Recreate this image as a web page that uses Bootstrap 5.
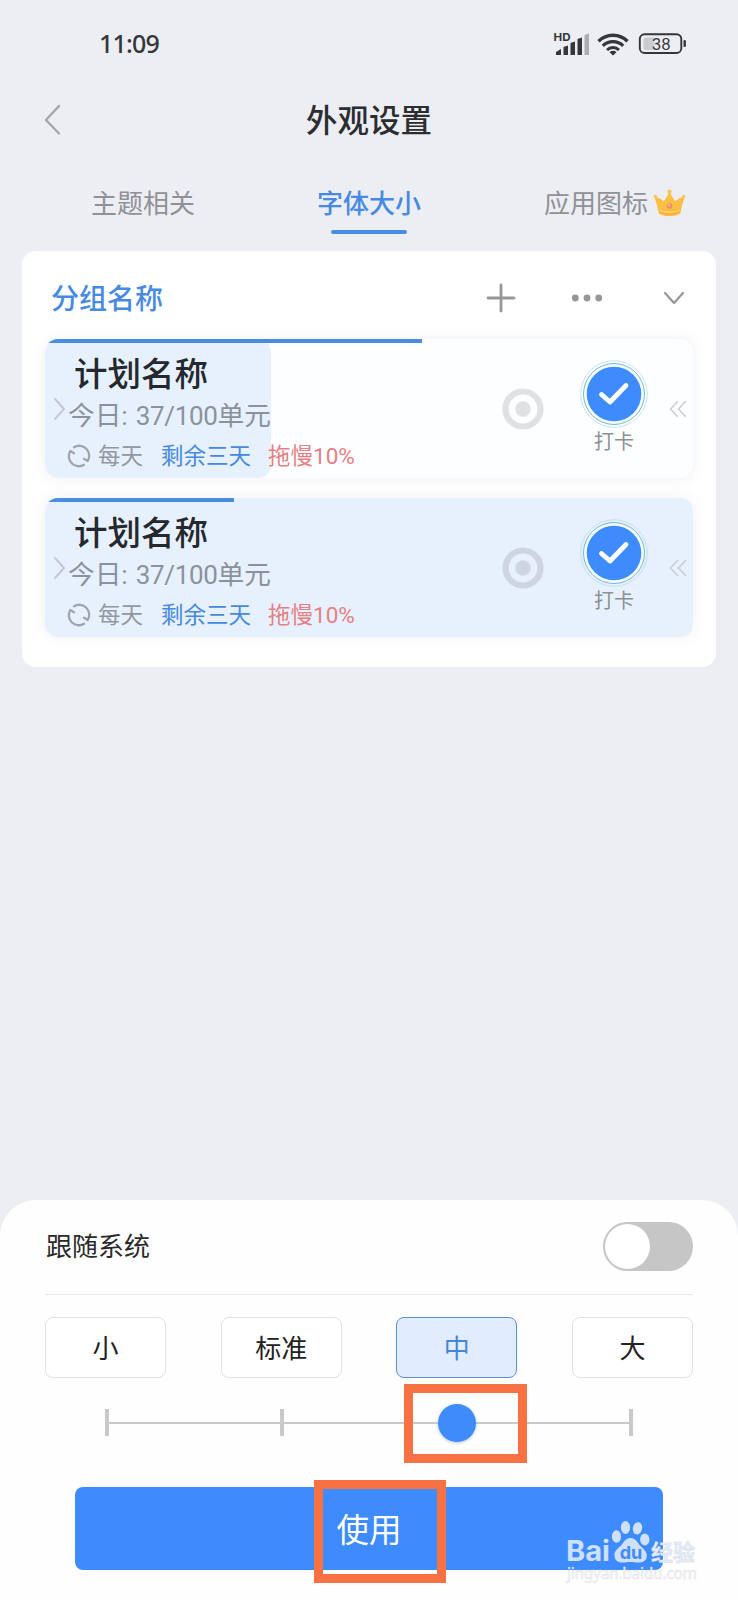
<!DOCTYPE html>
<html lang="zh-CN">
<head>
<meta charset="utf-8">
<meta name="viewport" content="width=device-width, initial-scale=1">
<title>外观设置</title>
<link href="https://cdn.jsdelivr.net/npm/bootstrap@5.3.0/dist/css/bootstrap.min.css" rel="stylesheet">
<style>
  body{font-family:Roboto,"Noto Sans CJK SC",sans-serif;background:#edeef3;color:#2b2d31;line-height:1}
  svg{display:block;flex:none}
  .app-screen{width:738px;height:1600px}
  .status-line{height:60px;padding:28px 51px 0 99px}
  .clock{font:500 25px/32px "Noto Sans","Noto Sans CJK SC",sans-serif;letter-spacing:-.8px;color:#34363a;margin-top:-1px}
  .title-line{height:120px;padding-left:44px}
  .page-title{font-size:31.5px;font-weight:500;line-height:124px;color:#2b2d31;top:0}
  .tab-line{height:71px;font-size:26px;color:#8f9196}
  .tab-line .nav-link{color:inherit;padding:0;line-height:48px;height:46px}
  .tab-line .nav-link.active{color:#468ae4;font-weight:500}
  .tab-mark{width:76px;height:4px;border-radius:2px;background:#4a8ce0;margin-top:4px}
  .group-card{margin:0 22px;height:416px;border:0;border-radius:14px;padding:0 23px 0 23px}
  .group-head{height:88px;padding:6px 8px 0 6px}
  .group-name{font-size:28px;font-weight:500;color:#468ae4;line-height:40px;padding-top:4px}
  .plan{height:139px;border-radius:13px;box-shadow:0 0 14px rgba(60,70,90,.08);background:#fdfeff}
  .plan + .plan{margin-top:20px}
  .plan.tinted,.plan-fill{background:#e7f1fe}
  .plan-clip{border-radius:13px;overflow:hidden}
  .plan-fill{width:226px;height:139px;border-radius:13px}
  .plan-bar{height:4px;background:#4a8ce0}
  .plan-text{width:330px;white-space:nowrap}
  .plan-title{font-size:33.5px;font-weight:500;line-height:40px;margin:16px 0 0 29px;color:#25282d}
  .today{font-size:26.7px;line-height:36px;color:#8b929c;margin:3px 0 0 8px;padding-left:15px}
  .today .digits{font-size:26px;letter-spacing:-.35px;margin-left:8px}
  .meta-line{font-size:22.5px;line-height:30px;margin:7px 0 0 22px}
  .meta-line .c-grey{margin-left:7px}
  .meta-line .c-blue{margin-left:18px}
  .meta-line .c-red{margin-left:17px}
  .plan-side{padding-right:6px}
  .done-box{margin:-3px 20px 0 35px}
  .c-grey{color:#92989f}.c-blue{color:#4589df}.c-red{color:#e57f83}
  .done-label{font-size:20px;line-height:26px;color:#8d9093}
  .plan-target{opacity:.11}
  .sheet{height:400px;border-radius:36px 36px 0 0;background:#fefefe;padding:0 45px}
  .follow{height:94px;font-size:26px;color:#2a2a2a;padding-bottom:2px}
  .follow-label{padding:2px 0 0 1px}
  .toggle{width:90px;height:49px;border-radius:25px;background:#c6c6c6;padding:2px}
  .toggle i{display:block;width:45px;height:45px;border-radius:50%;background:#fff}
  .rule{height:1px;background:#e8e8e8}
  .size-row{margin-top:22px}
  .size-btn{width:121px;height:61px;border:1px solid #e2e2e2;border-radius:8px;font-size:26px;padding:3px 0 0;color:#222;background:#fff}
  .size-btn.picked{background:#e1edfe;border-color:#5c8fd0;color:#4686d8}
  .slider{margin:31px 60px 0;height:27px}
  .track{height:2px;background:#c9c9c9}
  .tick{width:4px;height:27px;background:#c9c9c9}
  .knob{width:38px;height:38px;border-radius:50%;background:#3e8cfb;box-shadow:0 1px 3px rgba(40,90,160,.35);margin:0 -18px 0 -16px}
  .use-row{margin-top:51px}
  .use-btn{width:588px;height:83px;border:0;border-radius:8px;background:#3d8bfd;color:#fff;font-size:32.5px;padding:6px 0 0}
  .callout{border:9px solid #f87143}
</style>
</head>
<body>
<svg width="0" height="0" class="position-absolute">
  <defs>
    <linearGradient id="gold" x1="0" y1="0" x2="0" y2="1"><stop offset="0" stop-color="#fdc23c"/><stop offset=".65" stop-color="#fdc046"/><stop offset="1" stop-color="#fbae35"/></linearGradient>
    <symbol id="arrow-r" viewBox="0 0 13 24"><path d="M2 2 11 12 2 22" fill="none" stroke="#c3c9d1" stroke-width="2" stroke-linecap="round" stroke-linejoin="round"/></symbol>
    <symbol id="arrows-l" viewBox="0 0 18 18"><path d="M8.500 1.500 1.500 9l7 7.500M16.500 1.500 9.500 9l7 7.500" fill="none" stroke="#c9cdd2" stroke-width="1.500" stroke-linecap="round" stroke-linejoin="round"/></symbol>
    <symbol id="cycle" viewBox="0 0 24 24"><g fill="none" stroke="#a0a5ab" stroke-width="2.300" stroke-linecap="round" stroke-linejoin="round"><path d="M7 3.200A10 10 0 0 1 20.700 17L17 14.800"/><path d="M17 20.800A10 10 0 0 1 3.300 7L7 9.200"/></g></symbol>
    <symbol id="target" viewBox="0 0 42 42"><circle cx="21" cy="21" r="17.500" fill="none" stroke="#000" stroke-width="6.200"/><circle cx="21" cy="21" r="7.700"/></symbol>
    <symbol id="done" viewBox="0 0 70 70"><circle cx="35" cy="35" r="33.300" fill="none" stroke="#b9e0ee" stroke-width=".9"/><circle cx="35" cy="35" r="30.500" fill="#f3fdff" stroke="#7fb4d0" stroke-width="1"/><circle cx="35" cy="35" r="27.300" fill="#3d8bfd"/><path d="M22.500 35.500 31 43 47 26.500" fill="none" stroke="#fff" stroke-width="4.800" stroke-linecap="round" stroke-linejoin="round"/></symbol>
  </defs>
</svg>
<main class="app-screen d-flex flex-column overflow-hidden">
  <header>
    <div class="status-line d-flex justify-content-between">
      <span class="clock">11:09</span>
      <svg width="134" height="28" viewBox="553 28 134 28">
        <text x="553.500" y="41" font-family="Inter,sans-serif" font-size="11" font-weight="700" fill="#34363a" textLength="17" lengthAdjust="spacingAndGlyphs">HD</text>
        <g fill="#34363a"><path d="M556 55v-3l5-3v6zM563.500 55v-8l4.500-1.500V55zM570.500 55V43l4.500-1.500V55zM577.500 55V39l4.500-1.500V55z"/><path fill="#abadb2" d="M584.500 55V35l4.500-1.500V55z"/></g>
        <g fill="none" stroke="#34363a" stroke-width="3.400"><path d="M598.500 41.200a20.500 20.500 0 0 1 29 0"/><path d="M602.800 45.800a14.500 14.500 0 0 1 20.400 0" stroke-width="3.200"/><path d="M607 50a8.700 8.700 0 0 1 12 0" stroke-width="3"/></g>
        <path d="M609.500 52.300a5 5 0 0 1 7 0L613 55.600z" fill="#34363a"/>
        <rect x="639.800" y="34.300" width="41.500" height="18.700" rx="4.800" fill="none" stroke="#34363a" stroke-width="1.900"/>
        <rect x="643.500" y="37.500" width="11" height="12.500" rx="2" fill="#cbccd0"/>
        <rect x="683.500" y="40" width="2.400" height="7" rx="1" fill="#34363a"/>
        <text x="661.500" y="49.500" text-anchor="middle" font-family="Liberation Sans,sans-serif" font-size="16" letter-spacing=".5" fill="#34363a">38</text>
      </svg>
    </div>
    <div class="title-line d-flex align-items-center position-relative">
      <svg width="17" height="32" viewBox="0 0 17 32"><path d="M15 2 2 16l13 13.500" fill="none" stroke="#a4a6aa" stroke-width="2.400" stroke-linecap="round" stroke-linejoin="round"/></svg>
      <h1 class="page-title position-absolute start-0 end-0 text-center m-0">外观设置</h1>
    </div>
    <nav class="tab-line nav nav-justified flex-nowrap align-items-start">
      <div class="d-flex justify-content-center" style="width:286px"><a class="nav-link">主题相关</a></div>
      <div class="d-flex flex-column align-items-center" style="width:166px"><a class="nav-link active">字体大小</a><span class="tab-mark"></span></div>
      <div class="d-flex justify-content-end gap-2" style="width:234px"><a class="nav-link flex-grow-0">应用图标</a>
        <svg width="33" height="28" viewBox="0 0 33 28" style="margin-top:9px;margin-left:-3px"><path d="M2 8q5 1 9 5L16.500 4 22 13q4-4 9-5Q28.500 16 26.800 24.500 16.500 29 6.300 24.500 4.600 16 2 8z" fill="url(#gold)" stroke="#f9b43e" stroke-width=".8" stroke-linejoin="round"/><g fill="#fcc650"><circle cx="2.300" cy="7.500" r="1.800"/><circle cx="16.500" cy="2.800" r="2.200"/><circle cx="30.700" cy="7.500" r="1.800"/></g><path d="M6.500 21.500q10 3.500 20 0" fill="none" stroke="#ffdc7a" stroke-width="1.300"/><circle cx="16.500" cy="17" r="2.800" fill="#f08a62"/><circle cx="16" cy="16.300" r="1.200" fill="#f5b7a0"/></svg>
      </div>
    </nav>
  </header>

  <section class="card group-card">
    <div class="group-head d-flex align-items-center justify-content-between">
      <span class="group-name">分组名称</span>
      <div class="d-flex align-items-center">
        <svg width="30" height="30" viewBox="0 0 30 30"><path d="M15 2v26M2 15h26" stroke="#979797" stroke-width="2.800" stroke-linecap="round"/></svg>
        <svg width="32" height="8" viewBox="0 0 32 8" style="margin:0 60px 0 55px"><g fill="#979797"><circle cx="4.300" cy="4" r="3.400"/><circle cx="16" cy="4" r="3.400"/><circle cx="27.700" cy="4" r="3.400"/></g></svg>
        <svg width="22" height="14" viewBox="0 0 22 14"><path d="M2 2l9 10 9-10" fill="none" stroke="#979797" stroke-width="2.200" stroke-linecap="round" stroke-linejoin="round"/></svg>
      </div>
    </div>

    <article class="plan position-relative">
      <div class="plan-clip position-absolute top-0 start-0 w-100 h-100"><div class="plan-fill"><div class="plan-bar" style="width:377px"></div></div></div>
      <div class="position-relative d-flex h-100">
        <svg class="position-absolute" width="13" height="24" style="left:8px;top:58px"><use href="#arrow-r"/></svg>
        <div class="plan-text">
          <div class="plan-title">计划名称</div>
          <div class="today">今日:<span class="digits">37/100</span>单元</div>
          <div class="meta-line d-flex align-items-center"><svg width="24" height="24"><use href="#cycle"/></svg><span class="c-grey">每天</span><span class="c-blue">剩余三天</span><span class="c-red">拖慢10%</span></div>
        </div>
        <div class="d-flex align-items-center ms-auto plan-side">
          <svg class="plan-target" width="42" height="42"><use href="#target"/></svg>
          <div class="done-box d-flex flex-column align-items-center"><svg width="70" height="70"><use href="#done"/></svg><span class="done-label">打卡</span></div>
          <svg width="18" height="18"><use href="#arrows-l"/></svg>
        </div>
      </div>
    </article>

    <article class="plan tinted position-relative">
      <div class="plan-clip position-absolute top-0 start-0 w-100 h-100"><div class="plan-bar" style="width:189px"></div></div>
      <div class="position-relative d-flex h-100">
        <svg class="position-absolute" width="13" height="24" style="left:8px;top:58px"><use href="#arrow-r"/></svg>
        <div class="plan-text">
          <div class="plan-title">计划名称</div>
          <div class="today">今日:<span class="digits">37/100</span>单元</div>
          <div class="meta-line d-flex align-items-center"><svg width="24" height="24"><use href="#cycle"/></svg><span class="c-grey">每天</span><span class="c-blue">剩余三天</span><span class="c-red">拖慢10%</span></div>
        </div>
        <div class="d-flex align-items-center ms-auto plan-side">
          <svg class="plan-target" width="42" height="42"><use href="#target"/></svg>
          <div class="done-box d-flex flex-column align-items-center"><svg width="70" height="70"><use href="#done"/></svg><span class="done-label">打卡</span></div>
          <svg width="18" height="18"><use href="#arrows-l"/></svg>
        </div>
      </div>
    </article>
  </section>

  <section class="sheet mt-auto position-relative">
    <div class="follow d-flex align-items-center justify-content-between"><span class="follow-label">跟随系统</span><span class="toggle"><i></i></span></div>
    <div class="rule"></div>
    <div class="size-row d-flex justify-content-between">
      <button class="btn size-btn">小</button><button class="btn size-btn">标准</button><button class="btn size-btn picked">中</button><button class="btn size-btn">大</button>
    </div>
    <div class="slider position-relative d-flex align-items-center justify-content-between">
      <div class="track position-absolute start-0 end-0"></div>
      <span class="tick"></span><span class="tick"></span><span class="knob position-relative"></span><span class="tick"></span>
    </div>
    <div class="use-row text-center"><button class="btn use-btn">使用</button></div>
    <div class="callout position-absolute" style="left:404px;top:184px;width:123px;height:79px"></div>
    <div class="callout position-absolute" style="left:314px;top:280px;width:132px;height:103px"></div>
    <svg class="position-absolute" width="140" height="70" viewBox="562 1518 140 70" style="left:562px;top:318px">
      <g fill="#cfe0fb">
        <ellipse cx="616.500" cy="1536.500" rx="4.600" ry="6.200"/><ellipse cx="625.500" cy="1527.500" rx="4.600" ry="6.500"/><ellipse cx="637.500" cy="1528.300" rx="4.600" ry="6.200" transform="rotate(12 637.500 1528.300)"/><ellipse cx="644.800" cy="1539.500" rx="4.700" ry="6"/>
        <path d="M630.500 1538c-5 0-6.500 4-9.500 7.500-4 3.500-7 6-6.500 10.500.5 5 4 6.500 8 6.500 3 0 5-.5 8-.5s5 .5 8 .5c4 0 8-1.500 8.300-6.500.2-4.500-3-7-6.800-10.500-3-3.500-4.500-7.500-9.500-7.500z"/>
        <text x="566" y="1561" font-family="Inter,sans-serif" font-size="28" font-weight="700" textLength="44" lengthAdjust="spacingAndGlyphs">Bai</text>
      </g>
      <text x="631" y="1558.500" text-anchor="middle" font-family="Inter,sans-serif" font-size="18" font-weight="700" fill="#3d8bfd">du</text>
      <text x="651" y="1559.500" font-family="Noto Sans CJK SC,sans-serif" font-size="22" font-weight="700" fill="#e4ecfa" stroke="#d3d9e2" stroke-width=".4" textLength="44">经验</text>
      <text x="567" y="1579" font-family="Noto Sans,sans-serif" font-size="15.500" fill="#f4f6fa" stroke="#dcdfe4" stroke-width=".4" textLength="130">jingyan.baidu.com</text>
    </svg>
  </section>
</main>
<script src="https://cdn.jsdelivr.net/npm/bootstrap@5.3.0/dist/js/bootstrap.bundle.min.js"></script>
</body>
</html>
